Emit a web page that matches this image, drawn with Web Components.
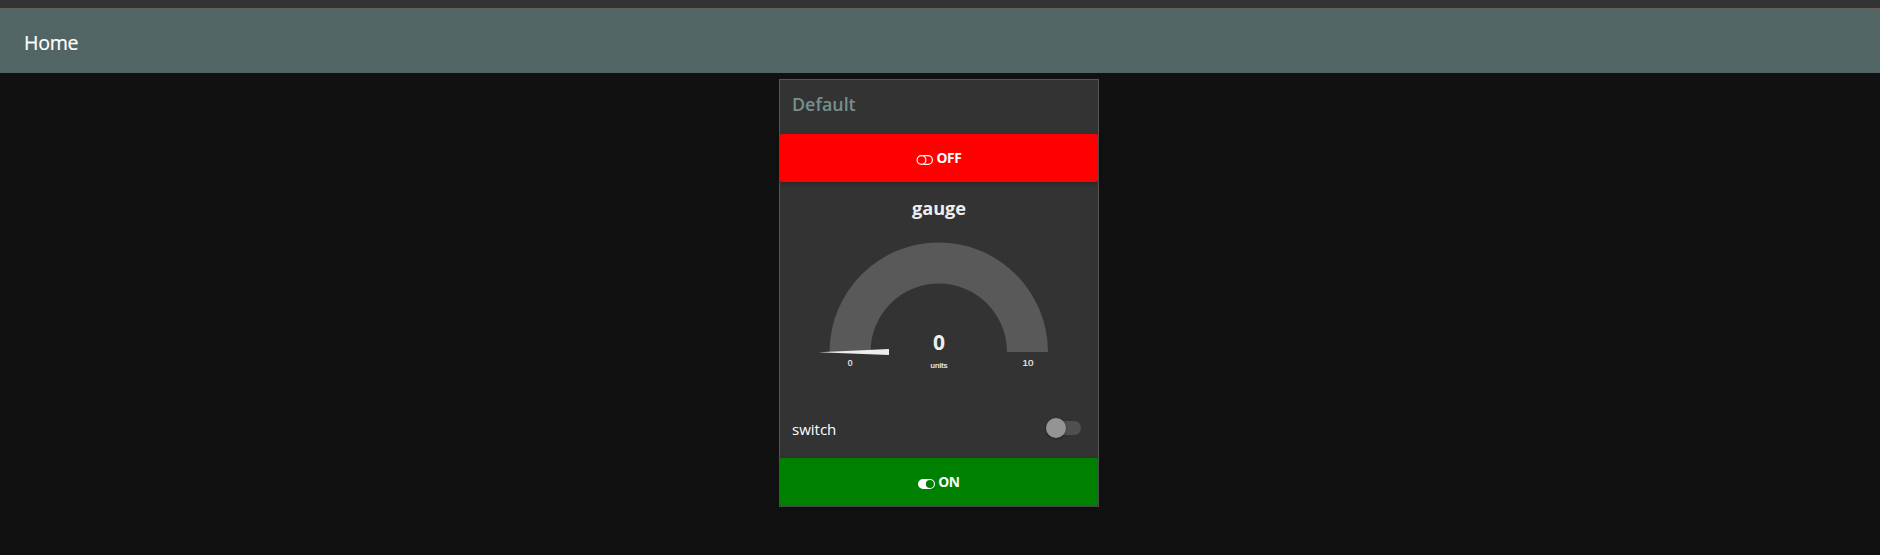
<!DOCTYPE html>
<html lang="en"><head><meta charset="utf-8"><title>Home</title>
<style>
html,body{margin:0;height:100%;background:#111;overflow:hidden}
body{font-family:"Open Sans","Noto Sans",sans-serif;color:#eee}
</style></head><body>
<dash-app>
  <dash-toolbar slot="bar">Home</dash-toolbar>
  <dash-card heading="Default">
    <dash-button kind="off">OFF</dash-button>
    <dash-gauge label="gauge" value="0" units="units" min="0" max="10"></dash-gauge>
    <dash-switch>switch</dash-switch>
    <dash-button kind="on">ON</dash-button>
  </dash-card>
</dash-app>
<script>
function define(name, render){
  customElements.define(name, class extends HTMLElement{
    constructor(){ super(); this.attachShadow({mode:'open'}); }
    connectedCallback(){ this.shadowRoot.innerHTML = render(this); }
  });
}
define('dash-app', () => `<style>
:host{display:flex;flex-direction:column;height:555px;background:#111}
main{display:flex;justify-content:center;padding:6px 2px 0 0}
</style><slot name="bar"></slot><main><slot></slot></main>`);
define('dash-toolbar', () => `<style>
:host{display:block;height:73px;box-sizing:border-box;border-top:8px solid #333;background:#526565}
div{height:65px;box-sizing:border-box;border-top:1px solid #665d58;padding:7px 24px 3px;display:flex;align-items:center;font-size:19.6px;letter-spacing:-.3px;line-height:28px;color:#fff;-webkit-text-stroke:.2px #fff}
</style><div><span><slot></slot></span></div>`);
define('dash-card', el => `<style>
:host{display:flex;flex-direction:column;width:320px;height:428px;box-sizing:border-box;border:1px solid #555;background:#333}
h2{margin:0;height:54px;box-sizing:border-box;padding:11px 12px 0;font-size:17.9px;line-height:26px;font-weight:600;color:#759090}
</style><h2>${el.getAttribute('heading')}</h2><slot></slot>`);
define('dash-button', el => {
  const on = el.getAttribute('kind') === 'on';
  const icon = on
    ? '<path fill="#fff" fill-rule="evenodd" d="M5 0H12A5 5 0 0 1 12 10H5A5 5 0 0 1 5 0ZM11.9 1A4 4 0 0 0 11.9 9A4 4 0 0 0 11.9 1Z"/>'
    : '<g fill="none" stroke="#fff" stroke-width="1.15"><circle cx="5.5" cy="5" r="4.4"/><path d="M7.5 .6H12A4.4 4.4 0 0 1 12 9.4H7.5"/></g>';
  return `<style>
:host{display:block;height:48px;position:relative;z-index:1}
button{width:100%;height:48px;border:0;border-radius:2px;padding:0;display:flex;align-items:center;justify-content:center;gap:3px;background:${on?'green':'red'};color:#fff;font:700 13.8px/20px "Open Sans","Noto Sans",sans-serif;letter-spacing:-.3px;box-shadow:0 2px 5px rgba(0,0,0,.26)}
svg{display:block;margin-top:4px}
span{margin-top:-1px}
</style><button><svg width="17" height="10" viewBox="0 0 17 10">${icon}</svg><span><slot></slot></span></button>`;
});
define('dash-gauge', el => {
  const a = n => el.getAttribute(n);
  return `<style>
:host{display:block;height:222px;box-sizing:border-box;padding-top:12px}
h3{margin:0;text-align:center;font-size:18.2px;line-height:28px;font-weight:700;color:#eee}
svg{display:block}
text{text-anchor:middle;fill:#eee}
.s{font-family:"Liberation Sans",Arial,sans-serif;stroke:#eee;stroke-width:.2px}
</style><h3>${a('label')}</h3>
<svg width="318" height="160" viewBox="0 0 318 160">
<path d="M49.5 130A109.25 109.5 0 0 1 268 130H227A68.25 68.5 0 0 0 90.5 130Z" fill="#595959"/>
<path d="M38.5 130.3L109 127V133Z" fill="#eee"/>
<text x="159" y="128" font-size="21" font-weight="700">${a('value')}</text>
<text class="s" x="159" y="145.8" font-size="8">${a('units')}</text>
<text class="s" x="70" y="143.6" font-size="8.5">${a('min')}</text>
<text class="s" x="248" y="144" font-size="9.8">${a('max')}</text>
</svg>`;
});
define('dash-switch', () => `<style>
:host{display:flex;height:54px;align-items:center;justify-content:space-between;padding:0 17px 0 12px;font-size:15.1px;letter-spacing:-.05px;line-height:22px;color:#fff}
span{margin-top:-5px}
i{display:block;position:relative;width:33px;height:14px;border-radius:7px;background:#505050;margin-top:-6px}
i::after{content:"";position:absolute;left:-2px;top:-3px;width:20px;height:20px;border-radius:50%;background:#949494;box-shadow:0 1px 3px rgba(0,0,0,.3)}
</style><span><slot></slot></span><i></i>`);
</script></body></html>
